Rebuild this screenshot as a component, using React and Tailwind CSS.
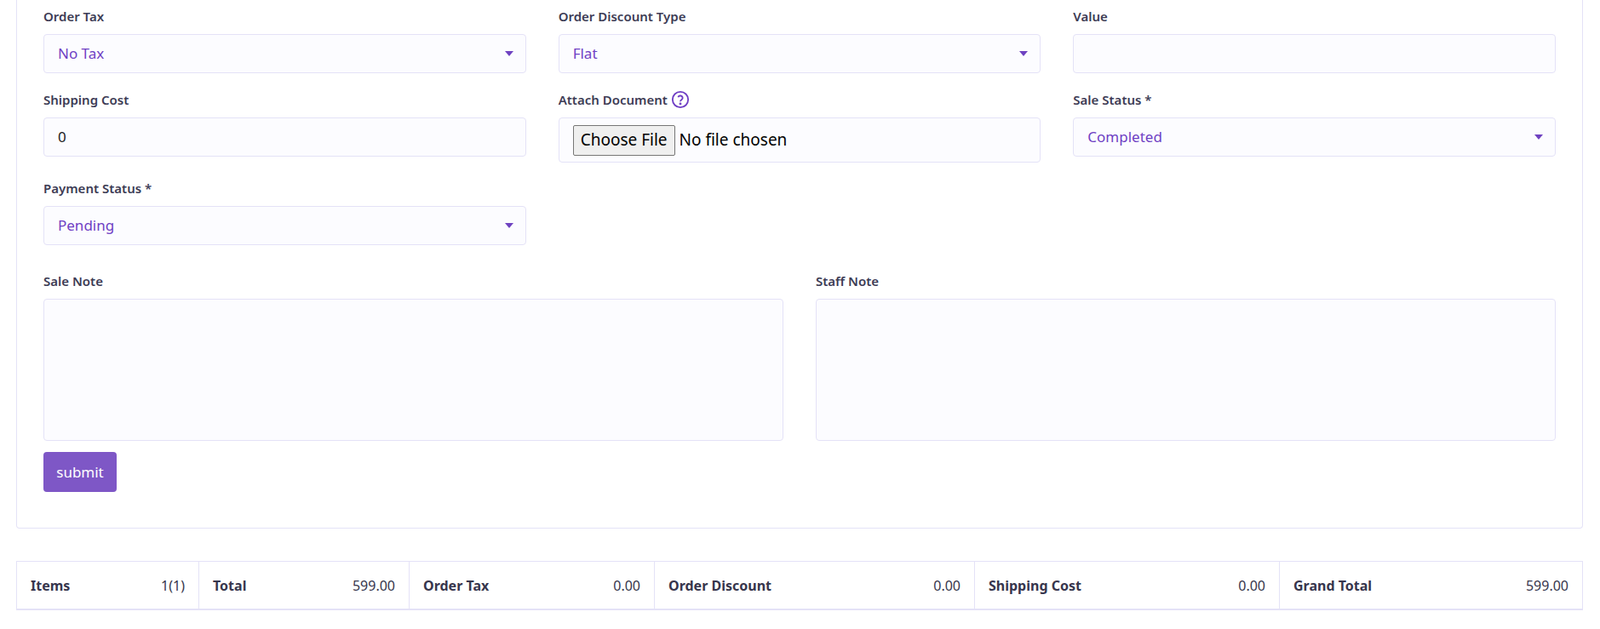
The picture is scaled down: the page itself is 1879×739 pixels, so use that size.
const Caret = () => (
  <svg width="10" height="6" viewBox="0 0 10 6" className="absolute right-[14px] top-1/2 -translate-y-1/2"><path d="M0 0h10L5 6z" fill="#6f42c1"/></svg>
);
const Label = ({ children }) => (
  <div className="text-[15px] font-semibold text-[#3d3c55] mb-[10px] h-[22px] flex items-center gap-1">{children}</div>
);
const Select = ({ value }) => (
  <div className="relative h-[46px] border border-[#e4e2f7] rounded-[4px] bg-[#fcfcff] flex items-center px-4 text-[17px] text-[#6f3fc4]">{value}<Caret /></div>
);
const Input = ({ value }) => (
  <div className="h-[46px] border border-[#e4e2f7] rounded-[4px] bg-[#fcfcff] flex items-center px-4 text-[17px] text-[#222]">{value}</div>
);
const Cell = ({ l, v, w }) => (
  <div className={`flex items-center justify-between px-4 border-r border-[#e4e2f7] last:border-r-0 ${w}`}>
    <span className="text-[16px] font-bold text-[#37364d]">{l}</span>
    <span className="text-[16px] text-[#37364d]">{v}</span>
  </div>
);
export default function App() {
  return (
    <div className="w-[1879px] h-[739px] bg-white px-[19px] pr-[20px] font-['Open_Sans',sans-serif]">
      <div className="border border-t-0 border-[#e4e2f7] rounded-b-[4px] px-[31px] pt-[8px] pb-[42px]">
        <div className="grid grid-cols-3 gap-x-[38px]">
          <div><Label>Order Tax</Label><Select value="No Tax" /></div>
          <div><Label>Order Discount Type</Label><Select value="Flat" /></div>
          <div><Label>Value</Label><Input value="" /></div>
        </div>
        <div className="grid grid-cols-3 gap-x-[38px] mt-[20px] items-start">
          <div><Label>Shipping Cost</Label><Input value="0" /></div>
          <div>
            <Label>Attach Document
              <svg width="22" height="22" viewBox="0 0 24 24" fill="none" stroke="#6f3fc4" strokeWidth="2"><circle cx="12" cy="12" r="10"/><path d="M9.1 9a3 3 0 0 1 5.8 1c0 2-3 2.5-3 4.5"/><circle cx="12" cy="17.5" r=".6" fill="#6f3fc4"/></svg>
            </Label>
            <div className="h-[53px] border border-[#e4e2f7] rounded-[4px] bg-[#fcfcff] flex items-center px-4 text-[19px] font-['Noto_Sans',sans-serif] text-black gap-[5px]">
              <span className="border border-[#767676] bg-[#efefef] rounded-[2px] px-[8px] h-[36px] flex items-center">Choose File</span>
              <span>No file chosen</span>
            </div>
          </div>
          <div><Label>Sale Status *</Label><Select value="Completed" /></div>
        </div>
        <div className="grid grid-cols-3 gap-x-[38px] mt-[19px]">
          <div><Label>Payment Status *</Label><Select value="Pending" /></div>
        </div>
        <div className="grid grid-cols-2 gap-x-[38px] mt-[31px]">
          <div><Label>Sale Note</Label><div className="h-[167px] border border-[#e4e2f7] rounded-[4px] bg-[#fcfcff]" /></div>
          <div><Label>Staff Note</Label><div className="h-[167px] border border-[#e4e2f7] rounded-[4px] bg-[#fcfcff]" /></div>
        </div>
        <button className="mt-[13px] h-[47px] w-[86px] rounded-[4px] bg-[#7e57c6] text-white text-[17px]">submit</button>
      </div>
      <div className="mt-[38px] h-[58px] border border-[#e4e2f7] border-b-2 flex">
        <Cell l="Items" v="1(1)" w="w-[214px]" />
        <Cell l="Total" v="599.00" w="w-[247px]" />
        <Cell l="Order Tax" v="0.00" w="w-[288px]" />
        <Cell l="Order Discount" v="0.00" w="w-[376px]" />
        <Cell l="Shipping Cost" v="0.00" w="w-[358px]" />
        <Cell l="Grand Total" v="599.00" w="flex-1" />
      </div>
    </div>
  );
}
